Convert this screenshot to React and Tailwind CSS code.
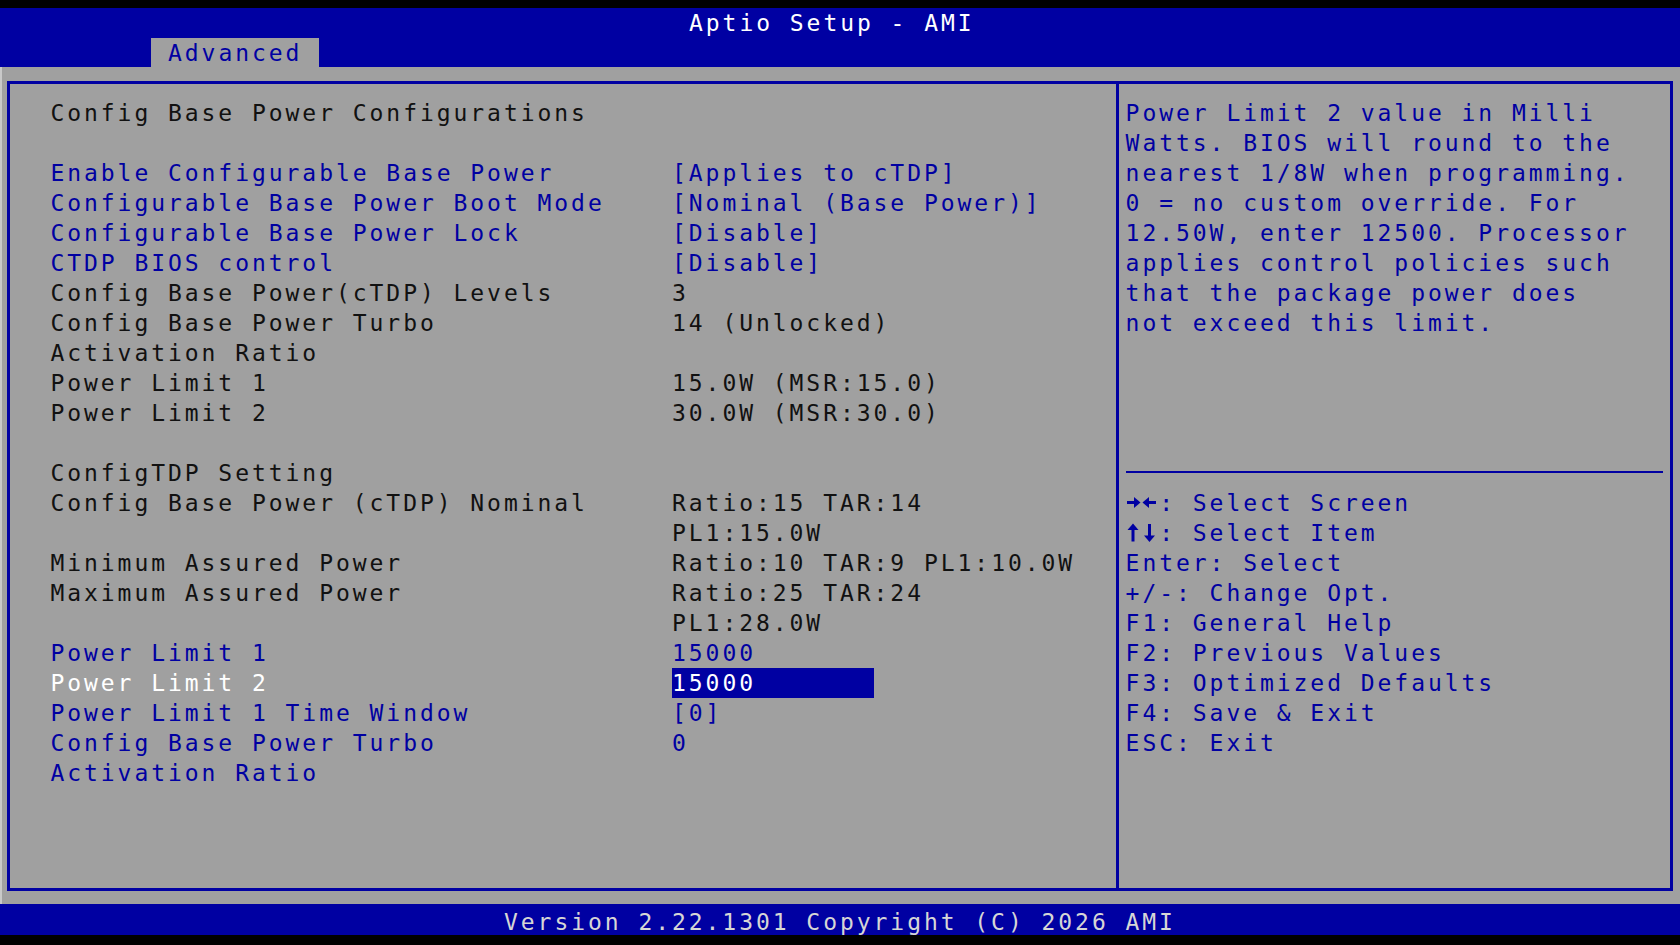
const BLUE = 'text-[#0000a2]'
const DARK = 'text-[#111111]'

const leftRows = [
  { label: 'Config Base Power Configurations', tone: DARK },
  {},
  { label: 'Enable Configurable Base Power', value: '[Applies to cTDP]', tone: BLUE },
  { label: 'Configurable Base Power Boot Mode', value: '[Nominal (Base Power)]', tone: BLUE },
  { label: 'Configurable Base Power Lock', value: '[Disable]', tone: BLUE },
  { label: 'CTDP BIOS control', value: '[Disable]', tone: BLUE },
  { label: 'Config Base Power(cTDP) Levels', value: '3', tone: DARK },
  { label: 'Config Base Power Turbo', value: '14 (Unlocked)', tone: DARK },
  { label: 'Activation Ratio', tone: DARK },
  { label: 'Power Limit 1', value: '15.0W (MSR:15.0)', tone: DARK },
  { label: 'Power Limit 2', value: '30.0W (MSR:30.0)', tone: DARK },
  {},
  { label: 'ConfigTDP Setting', tone: DARK },
  { label: 'Config Base Power (cTDP) Nominal', value: 'Ratio:15 TAR:14', tone: DARK },
  { value: 'PL1:15.0W', tone: DARK },
  { label: 'Minimum Assured Power', value: 'Ratio:10 TAR:9 PL1:10.0W', tone: DARK },
  { label: 'Maximum Assured Power', value: 'Ratio:25 TAR:24', tone: DARK },
  { value: 'PL1:28.0W', tone: DARK },
  { label: 'Power Limit 1', value: '15000', tone: BLUE },
  { label: 'Power Limit 2', value: '15000', tone: 'text-white', selected: true },
  { label: 'Power Limit 1 Time Window', value: '[0]', tone: BLUE },
  { label: 'Config Base Power Turbo', value: '0', tone: BLUE },
  { label: 'Activation Ratio', tone: BLUE },
]

const helpLines = [
  'Power Limit 2 value in Milli',
  'Watts. BIOS will round to the',
  'nearest 1/8W when programming.',
  '0 = no custom override. For',
  '12.50W, enter 12500. Processor',
  'applies control policies such',
  'that the package power does',
  'not exceed this limit.',
]

// arrow pairs drawn as glyph cells (2 columns wide)
function LeftRight() {
  return (
    <svg width="33.6" height="30" viewBox="0 0 33.6 30" className="inline-block align-top" fill="currentColor">
      <rect x="1" y="13" width="8" height="3" />
      <polygon points="8,9 14.5,14.5 8,20" />
      <polygon points="23,9 16.5,14.5 23,20" />
      <rect x="22" y="13" width="8" height="3" />
    </svg>
  )
}

function UpDown() {
  return (
    <svg width="33.6" height="30" viewBox="0 0 33.6 30" className="inline-block align-top" fill="currentColor">
      <polygon points="1.5,12 7,5.5 12.5,12" />
      <rect x="5.5" y="11" width="3" height="12.5" />
      <rect x="22" y="6" width="3" height="12.5" />
      <polygon points="18,17.5 23.5,24 29,17.5" />
    </svg>
  )
}

const keys = [
  [LeftRight, ': Select Screen'],
  [UpDown, ': Select Item'],
  [null, 'Enter: Select'],
  [null, '+/-: Change Opt.'],
  [null, 'F1: General Help'],
  [null, 'F2: Previous Values'],
  [null, 'F3: Optimized Defaults'],
  [null, 'F4: Save & Exit'],
  [null, 'ESC: Exit'],
]

function Row({ label, value, tone, selected }) {
  return (
    <div className={`flex h-[30px] whitespace-pre ${tone}`}>
      <div className="w-[621.6px] shrink-0">{label}</div>
      {selected ? (
        <div className="w-[201.6px] bg-[#0000a2] text-white">{value}</div>
      ) : (
        <div>{value}</div>
      )}
    </div>
  )
}

export default function App() {
  return (
    <div className="w-[1680px] h-[945px] bg-black flex flex-col pt-[8px] font-['DejaVu_Sans_Mono',monospace] text-[23px] leading-[30px] tracking-[2.95px]">
      <header className="h-[59px] bg-[#0000a2] flex flex-col">
        <div className="h-[30px] pl-[689px] text-white whitespace-pre">Aptio Setup - AMI</div>
        <div className="h-[29px] pl-[151.2px]">
          <div className="w-[168px] h-[29px] bg-[#a0a0a0] pl-[16.8px] text-[#0000a2]">Advanced</div>
        </div>
      </header>

      <main className="h-[837px] bg-[#a0a0a0] pt-[14px] pl-[7px] pr-[7px] border-l-2 border-[#c9c9c9]">
        <div className="h-[810px] -ml-[2px] border-[3px] border-[#0000a2] flex">
          <section className="w-[1106px] shrink-0 pt-[13.5px] pl-[40.4px]">
            {leftRows.map((r, i) => (
              <Row key={i} {...r} />
            ))}
          </section>
          <div className="w-[3px] bg-[#0000a2]" />
          <aside className="flex-1 pt-[13.5px] pl-[6.6px] text-[#0000a2] whitespace-pre">
            <div className="h-[360px]">
              {helpLines.map((t, i) => (
                <div key={i} className="h-[30px]">{t}</div>
              ))}
            </div>
            <div className="h-[30px] pt-[13px]">
              <div className="w-[537.6px] h-[2px] bg-[#0000a2]" />
            </div>
            {keys.map(([Icon, rest], i) => (
              <div key={i} className="h-[30px] flex">
                {Icon && <Icon />}
                <span>{rest}</span>
              </div>
            ))}
          </aside>
        </div>
      </main>

      <footer className="h-[31px] bg-[#0000a2] pl-[504px] pt-[3px] text-[#d6d6d6] whitespace-pre">
        Version 2.22.1301 Copyright (C) 2026 AMI
      </footer>
    </div>
  )
}
